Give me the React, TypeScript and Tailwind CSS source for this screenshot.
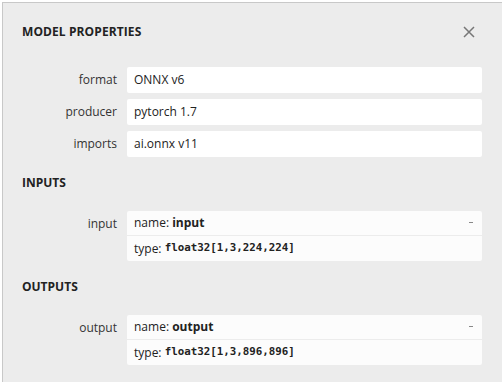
const props = [
  { label: "format", value: "ONNX v6" },
  { label: "producer", value: "pytorch 1.7" },
  { label: "imports", value: "ai.onnx v11" },
]

const inputs = [{ label: "input", name: "input", type: "float32[1,3,224,224]" }]
const outputs = [{ label: "output", name: "output", type: "float32[1,3,896,896]" }]

function Row({ label, children }: { label: string; children: React.ReactNode }) {
  return (
    <div className="flex items-start">
      <div className="w-[105px] shrink-0 pr-[10px] pt-[5px] text-right leading-[16px] text-[#333]">{label}</div>
      <div className="flex-1">{children}</div>
    </div>
  )
}

function Argument({ label, name, type }: { label: string; name: string; type: string }) {
  return (
    <Row label={label}>
      <div className="rounded-[2px] bg-[#fcfcfc]">
        <div className="flex h-[25px] items-center justify-between border-b border-[#ececec] pl-[7px] pr-[9px]">
          <span>
            name: <b className="font-bold">{name}</b>
          </span>
          <span className="mb-[2px] h-px w-[4px] bg-[#888]"></span>
        </div>
        <div className="flex h-[25px] items-center pl-[7px]">
          type:&nbsp;<span className="font-['DejaVu_Sans_Mono',monospace] text-[10.8px] font-bold">{type}</span>
        </div>
      </div>
    </Row>
  )
}

export default function App() {
  return (
    <div className="h-[382px] w-[502px] overflow-hidden bg-white pl-[2px] pt-[2px] font-['Open_Sans',sans-serif] text-[12px] text-[#222]">
      <div className="h-full border-l border-t border-[#c8c8c8] bg-[#ececec] pl-[19px] pr-[20px]">
        <div className="flex items-center justify-between pt-[21px]">
          <h1 className="text-[12px] leading-[16px] font-bold tracking-[0.1px] text-[#222]">MODEL PROPERTIES</h1>
          <svg width="12" height="12" viewBox="0 0 12 12" className="mr-[7px]" stroke="#777" strokeWidth="1.5" fill="none">
            <path d="M1 1L11 11M11 1L1 11" />
          </svg>
        </div>

        <div className="mt-[27px] flex flex-col gap-[6px]">
          {props.map((p) => (
            <Row key={p.label} label={p.label}>
              <div className="flex h-[26px] items-center rounded-[2px] bg-white pl-[7px]">{p.value}</div>
            </Row>
          ))}
        </div>

        <h2 className="mt-[18px] text-[12px] leading-[16px] font-bold text-[#222]">INPUTS</h2>
        <div className="mt-[20px]">
          {inputs.map((a) => (
            <Argument key={a.label} {...a} />
          ))}
        </div>

        <h2 className="mt-[18px] text-[12px] leading-[16px] font-bold text-[#222]">OUTPUTS</h2>
        <div className="mt-[20px]">
          {outputs.map((a) => (
            <Argument key={a.label} {...a} />
          ))}
        </div>
      </div>
    </div>
  )
}
